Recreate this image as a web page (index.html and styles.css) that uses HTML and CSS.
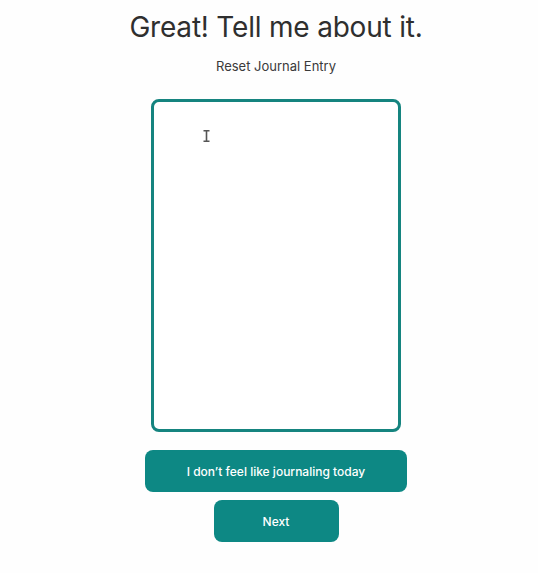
FILE: index.html
```html
<!DOCTYPE html>
<html lang="en">
<head>
<meta charset="utf-8">
<title>Journal</title>
<link rel="stylesheet" href="styles.css">
</head>
<body>
<main class="page">
  <h1 class="title">Great! Tell me about it.</h1>
  <button class="reset" type="button">Reset Journal Entry</button>
  <div class="entry-wrap">
    <textarea class="entry" aria-label="Journal entry"></textarea>
    <svg class="cursor" width="7" height="12" viewBox="0 0 7 12" aria-hidden="true">
      <path d="M0.5 0.8h6M0.5 11.2h6M3.5 0.8v10.4" stroke="#555" stroke-width="1.6" fill="none"/>
    </svg>
  </div>
  <button class="btn btn-wide" type="button">I don’t feel like journaling today</button>
  <button class="btn btn-next" type="button">Next</button>
</main>
</body>
</html>
```
FILE: styles.css
```css
html, body {
  margin: 0;
  padding: 0;
  background: #fefefe;
}
.page {
  display: flex;
  flex-direction: column;
  align-items: center;
  padding-left: 14px;
  font-family: Inter, "Noto Sans", sans-serif;
  color: #2f2f2f;
}
.title {
  margin: 9px 0 0;
  font-size: 28px;
  line-height: 36px;
  font-weight: 400;
  letter-spacing: -0.2px;
}
.reset {
  margin-top: 12px;
  background: none;
  border: none;
  padding: 0;
  font-family: inherit;
  font-size: 13px;
  line-height: 18px;
  color: #3a3a3a;
}
.entry-wrap {
  position: relative;
  margin-top: 24px;
  width: 250px;
  height: 333px;
}
.entry {
  box-sizing: border-box;
  width: 100%;
  height: 100%;
  border: 3px solid #15847f;
  border-radius: 8px;
  background: #fff;
  resize: none;
  outline: none;
  display: block;
}
.cursor {
  position: absolute;
  left: 52px;
  top: 31px;
}
.btn {
  box-sizing: border-box;
  background: #0d8884;
  color: #fff;
  border: none;
  border-radius: 8px;
  font-family: inherit;
  font-size: 12px;
  font-weight: 500;
  height: 42px;
}
.btn-wide {
  margin-top: 18px;
  width: 262px;
}
.btn-next {
  margin-top: 8px;
  width: 125px;
}
```
